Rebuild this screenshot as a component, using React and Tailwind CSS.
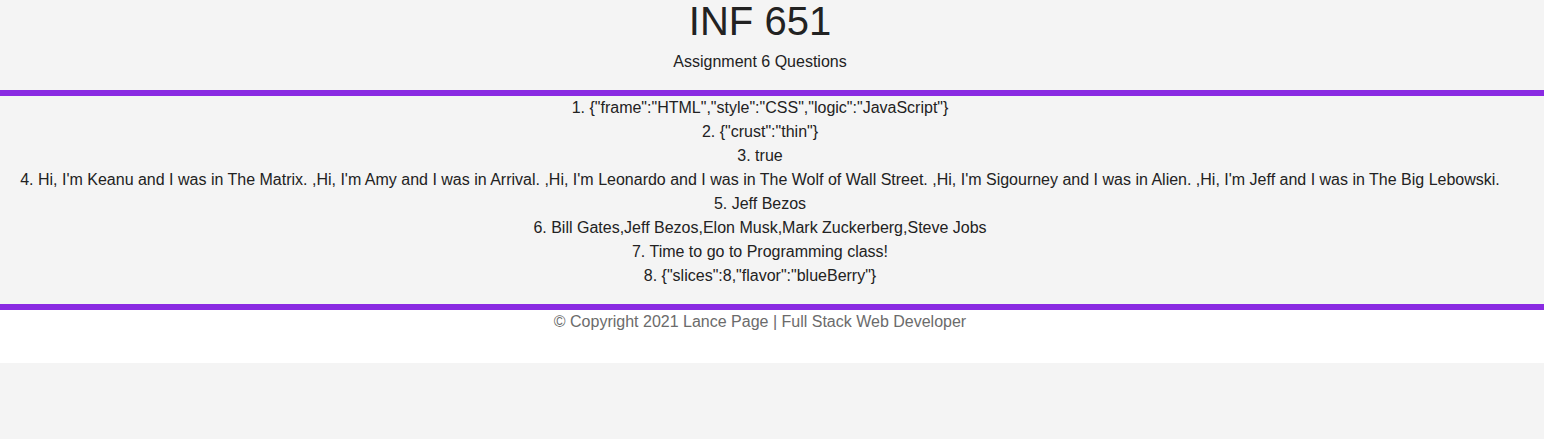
import React from 'react';

const answers = [
  '{"frame":"HTML","style":"CSS","logic":"JavaScript"}',
  '{"crust":"thin"}',
  'true',
  "Hi, I'm Keanu and I was in The Matrix. ,Hi, I'm Amy and I was in Arrival. ,Hi, I'm Leonardo and I was in The Wolf of Wall Street. ,Hi, I'm Sigourney and I was in Alien. ,Hi, I'm Jeff and I was in The Big Lebowski.",
  'Jeff Bezos',
  'Bill Gates,Jeff Bezos,Elon Musk,Mark Zuckerberg,Steve Jobs',
  'Time to go to Programming class!',
  '{"slices":8,"flavor":"blueBerry"}',
];

export default function App() {
  return (
    <div className="min-h-screen bg-[#f4f4f4] text-[#222] text-center font-['Liberation_Sans',Arial,sans-serif] text-base leading-6">
      <header className="h-[90px] pr-6">
        <h1 className="text-[40px] leading-[40px] pt-[1px]">INF 651</h1>
        <p className="mt-[9px]">Assignment 6 Questions</p>
      </header>

      <main className="border-t-[6px] border-b-[6px] border-[#8a2be2] pb-4 pr-6">
        {answers.map((a, i) => (
          <div key={i}>
            {i + 1}. {a}
          </div>
        ))}
      </main>

      <footer className="bg-white h-[53px] text-[#6b6b6b] pr-6">
        <p>© Copyright 2021 Lance Page | Full Stack Web Developer</p>
      </footer>
    </div>
  );
}
